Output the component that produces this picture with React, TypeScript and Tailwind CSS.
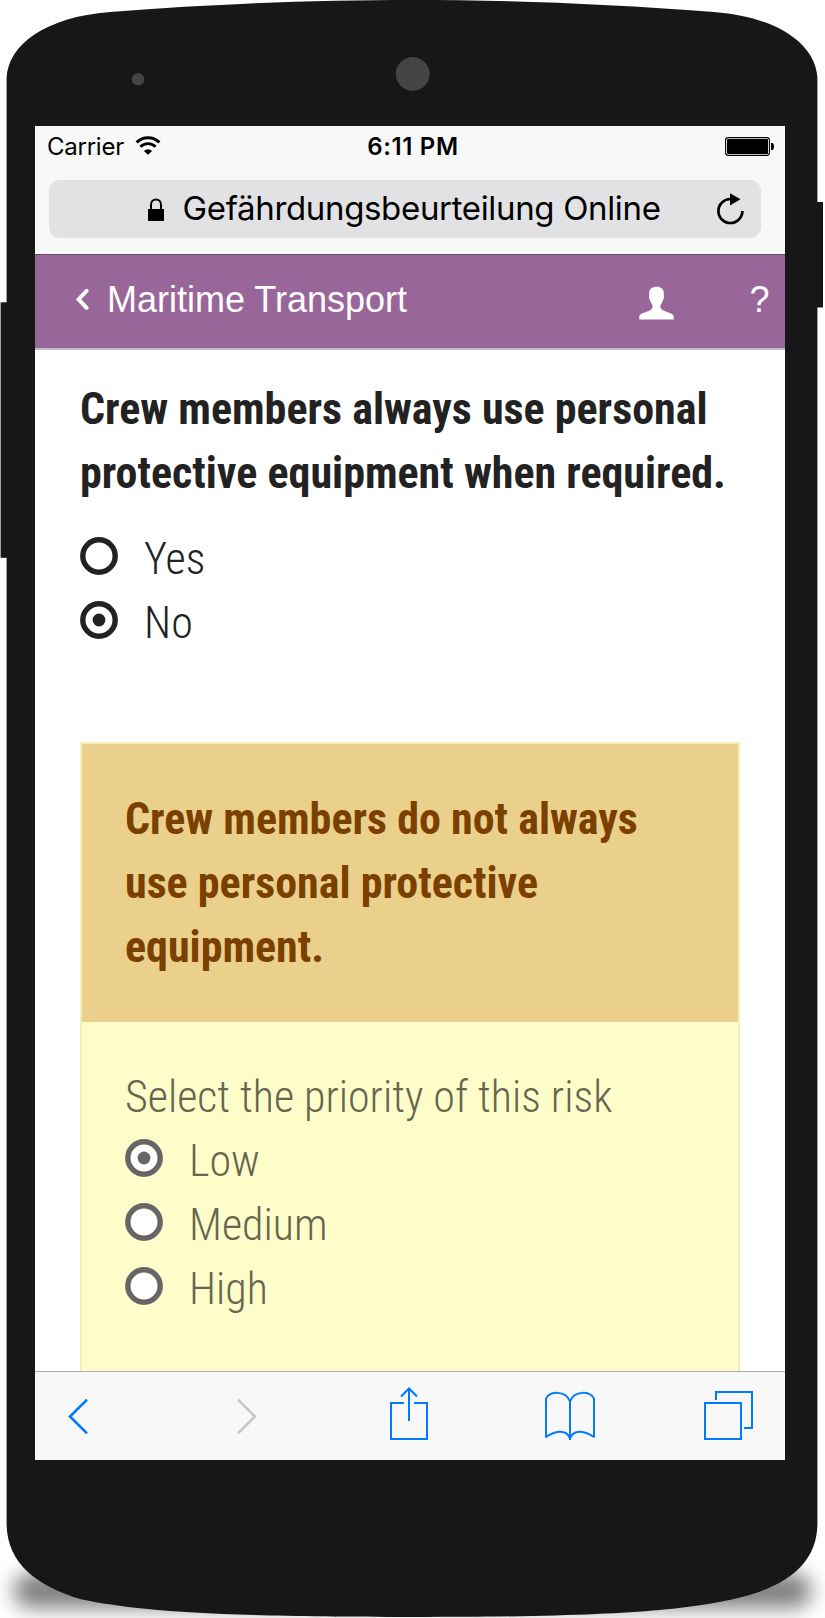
type OptionProps = { label: string; checked?: boolean; muted?: boolean };

function Option({ label, checked = false, muted = false }: OptionProps) {
  const color = muted ? "#666666" : "#222222";
  return (
    <label className="flex h-[64px] items-center">
      <svg width="38" height="38" viewBox="0 0 38 38" className="mb-[7px] shrink-0">
        <circle cx="19" cy="19" r="16.2" fill="#fff" stroke={color} strokeWidth="5.4" />
        {checked && <circle cx="19" cy="19" r="6.4" fill={color} />}
      </svg>
      <span className="ml-[26px]">{label}</span>
    </label>
  );
}

function DeviceBody() {
  return (
    <svg className="absolute inset-0" width="825" height="1618" viewBox="0 0 825 1618">
      <defs>
        <filter id="shadow" x="-10%" y="-150%" width="120%" height="400%">
          <feGaussianBlur stdDeviation="10" />
        </filter>
      </defs>
      <rect x="14" y="1573" width="797" height="35" rx="16" fill="#808080" filter="url(#shadow)" />
      <rect x="0.6" y="302.3" width="12" height="255.5" fill="#171717" />
      <rect x="812" y="202" width="11" height="105.5" fill="#171717" />
      <path
        fill="#171717"
        d="M6.6 78 C8 45 45 17 110 12 C220 3.5 320 0 412 0 C504 0 604 3.5 714 12 C779 17 816 45 817.4 78 V1523 C817.4 1563 788 1585 742 1597 C690 1610 620 1617 412 1617 C204 1617 134 1610 82 1599.5 C36 1586 6.6 1563 6.6 1523 Z"
      />
      <circle cx="138" cy="79.3" r="6.2" fill="#444" />
      <circle cx="412.7" cy="74" r="16.9" fill="#444" />
    </svg>
  );
}

function StatusBar() {
  return (
    <div className="grid h-[35px] grid-cols-3 pt-[6px] text-[24px] leading-[30px] text-black">
      <div className="flex pl-[12px]">
        <span className="tracking-[-0.25px]">Carrier</span>
        <svg className="ml-[11px] mt-[4px]" width="26" height="20" viewBox="0 0 26 20">
          <path d="M1.6 6.4 A16.2 16.2 0 0 1 24.4 6.4" fill="none" stroke="#000" strokeWidth="3" />
          <path d="M5.4 10.8 A10.8 10.8 0 0 1 20.6 10.8" fill="none" stroke="#000" strokeWidth="2.9" />
          <path d="M13 18.8 L8.9 14.9 A5.8 5.8 0 0 1 17.1 14.9 Z" />
        </svg>
      </div>
      <div className="pl-[6px] text-center font-semibold tracking-[0.65px]">6:11 PM</div>
      <svg className="ml-auto mr-[9px] mt-[5px]" width="51" height="19" viewBox="0 0 51 19">
        <rect x="0.6" y="0.6" width="43.8" height="17.8" rx="2.6" fill="none" stroke="#000" strokeWidth="1.1" />
        <rect x="2" y="2" width="41" height="15" rx="1" />
        <path d="M46 6 H47 Q49 6.3 49 9.5 Q49 12.7 47 13 H46 Z" />
      </svg>
    </div>
  );
}

function AddressBar() {
  return (
    <div className="ml-[14px] mt-[19px] flex h-[58px] w-[712px] items-center rounded-[11px] bg-[#e2e2e4] text-black">
      <svg className="ml-[99px] shrink-0" width="16" height="23" viewBox="0 0 16 23">
        <path d="M3 12 V6.8 C3 -0.4 13 -0.4 13 6.8 V12" fill="none" stroke="#000" strokeWidth="2" />
        <path d="M0 11 H16 V23 H0 Z" />
      </svg>
      <span className="ml-[18.5px] whitespace-nowrap pb-[2px] text-[33px] leading-[56px] tracking-[-0.34px]">
        Gefährdungsbeurteilung Online
      </span>
      <svg className="ml-auto mr-[16px] shrink-0" width="30" height="32" viewBox="0 0 30 32">
        <path d="M27.4 18 A12 12 0 1 1 15.5 6" fill="none" stroke="#000" strokeWidth="2.7" />
        <path d="M15 0.3 L25.5 6.3 L15 12.6 Z" />
      </svg>
    </div>
  );
}

function AppHeader() {
  return (
    <header className="flex h-[96px] border-b-2 border-t border-b-[#c0bfc0] border-t-[#674767] bg-[#996699] pt-[25px] font-['Liberation_Sans',sans-serif] text-[36px] leading-[40px] text-white">
      <svg className="ml-[41px] mt-[8px] shrink-0" width="13" height="23" viewBox="0 0 13 23">
        <path d="M10.6 2.8 L2.6 11.3 L10.6 19.8" fill="none" stroke="#fff" strokeWidth="3.9" strokeLinecap="round" strokeLinejoin="miter" />
      </svg>
      <h1 className="ml-[18px]">Maritime Transport</h1>
      <svg className="ml-auto mt-[6px] shrink-0" width="35" height="34" viewBox="0 0 35 34">
        <path
          fill="#fff"
          d="M17.5 0.7 C22 0.7 24.9 3 24.8 7 L24.7 9 C25.4 9.4 25 12.5 24 14.3 C23.4 16.5 21.8 18 21.4 20 C21.2 22.2 22.3 23.6 25.5 24.9 C31 27 34.7 27.7 34.7 31 V33.5 H0.3 V31 C0.3 27.7 4 27 9.5 24.9 C12.7 23.6 13.8 22.2 13.6 20 C13.2 18 11.6 16.5 11 14.3 C10 12.5 9.6 9.4 10.3 9 L10.2 7 C10.1 3 13 0.7 17.5 0.7 Z"
        />
      </svg>
      <span className="ml-[75.5px] mr-[15.5px]">?</span>
    </header>
  );
}

function Toolbar() {
  return (
    <nav className="flex h-[89px] shrink-0 border-t border-[#acacac] bg-[#f8f8f8] pt-[14px]" aria-label="Browser">
      <svg className="ml-[33px] mt-[11.5px]" width="20" height="37" viewBox="0 0 20 37" fill="none" stroke="#007aff" strokeWidth="2.6">
        <path d="M19 1.7 L2 18.5 L19 35.3" />
      </svg>
      <svg className="ml-[149px] mt-[11.5px]" width="20" height="37" viewBox="0 0 20 37" fill="none" stroke="#c6c6c6" strokeWidth="2.6">
        <path d="M1 1.7 L18 18.5 L1 35.3" />
      </svg>
      <svg className="ml-[132px]" width="40" height="56" viewBox="0 0 40 56" fill="none" stroke="#007aff" strokeWidth="2">
        <path d="M15 17 H2 V53 H38 V17 H25" />
        <path d="M20 35 V3 M12 10.5 L20 2.5 L28 10.5" />
      </svg>
      <svg className="ml-[115px]" width="52" height="56" viewBox="0 0 52 56" fill="none" stroke="#007aff" strokeWidth="2" strokeLinejoin="round">
        <path d="M2 12.5 C5 5 22 4 26 15.5 C30 4 47 5 50 12.5 V51 C42 45.5 30 42 26 52.5 C22 42 10 45.5 2 51 Z M26 14 V54" />
      </svg>
      <svg className="ml-[107px]" width="52" height="56" viewBox="0 0 52 56" fill="none" stroke="#007aff" strokeWidth="2">
        <path d="M2 17 H38 V53 H2 Z" />
        <path d="M13 14 V6 H49 V42 H41" />
      </svg>
    </nav>
  );
}

export default function App() {
  return (
    <div className="relative h-[1618px] w-[825px] overflow-hidden bg-white">
      <DeviceBody />
      <div className="relative ml-[35px] mt-[126px] flex h-[1334px] w-[750px] flex-col overflow-hidden bg-white">
        <div className="h-[128px] shrink-0 bg-[#f8f8f8] font-['Inter',sans-serif]">
          <StatusBar />
          <AddressBar />
        </div>
        <AppHeader />
        <main className="min-h-0 flex-1 overflow-hidden px-[45px] pt-[27px] font-['Roboto_Condensed','Roboto',sans-serif] text-[44px] font-light leading-[64px] text-[#222222]">
          <h2 className="whitespace-nowrap font-bold">
            Crew members always use personal
            <br />
            protective equipment when required.
          </h2>
          <div className="mt-[22px]">
            <Option label="Yes" />
            <Option label="No" checked />
          </div>
          <section className="mt-[87px] h-[900px] border-2 border-[#f1f0bb] bg-[#fefdc9]">
            <h3 className="bg-[#ebd08b] px-[43px] py-[43px] font-bold text-[#7a4000]">
              Crew members do not always
              <br />
              use personal protective
              <br />
              equipment.
            </h3>
            <div className="px-[43px] pt-[43px] text-[#666650]">
              <p>Select the priority of this risk</p>
              <Option label="Low" checked muted />
              <Option label="Medium" muted />
              <Option label="High" muted />
            </div>
          </section>
        </main>
        <Toolbar />
      </div>
    </div>
  );
}
